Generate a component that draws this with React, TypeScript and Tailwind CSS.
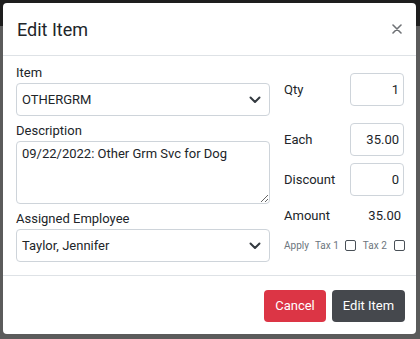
import React from "react";

const font = { fontFamily: 'Roboto, "Noto Sans", sans-serif' };

function Chevron() {
  return (
    <svg width="12" height="8" viewBox="0 0 12 8" className="shrink-0">
      <path d="M1.5 1.5 L6 6 L10.5 1.5" fill="none" stroke="#343a40" strokeWidth="2" strokeLinecap="round" strokeLinejoin="round" />
    </svg>
  );
}

function Select({ value }: { value: string }) {
  return (
    <div className="flex h-[33px] items-center justify-between rounded-[4px] border border-[#ced4da] bg-white pl-[5px] pr-[8px] text-[13px] text-[#212529]">
      <span>{value}</span>
      <Chevron />
    </div>
  );
}

function NumBox({ value }: { value: string }) {
  return (
    <div className="flex h-[33px] w-[54px] items-center justify-end rounded-[4px] border border-[#ced4da] bg-white pr-[4px] text-[13px] text-[#212529]">
      {value}
    </div>
  );
}

export default function App() {
  return (
    <div className="relative h-[339px] w-[420px] overflow-hidden bg-[#5b5b5b] p-[3px]" style={font}>
      <div className="absolute left-0 top-0 h-[26px] w-[420px] bg-[#1e1e1e]" />
      <div className="relative flex h-[331px] w-[413px] flex-col rounded-[4px] bg-white">
        <div className="flex h-[53px] items-center justify-between border-b border-[#dee2e6] pl-[14px] pr-[14px]">
          <span className="text-[18px] text-[#212529]">Edit Item</span>
          <svg width="10" height="10" viewBox="0 0 10 10">
            <path d="M1 1 L9 9 M9 1 L1 9" stroke="#6f7276" strokeWidth="1.6" strokeLinecap="round" />
          </svg>
        </div>
        <div className="flex flex-1 border-b border-[#dee2e6] pl-[13px] pt-[8px]">
          <div className="flex w-[254px] shrink-0 flex-col">
            <div className="text-[13px] leading-[18px] text-[#212529]">Item</div>
            <div className="mt-[1px]"><Select value="OTHERGRM" /></div>
            <div className="mt-[6px] text-[13px] leading-[18px] text-[#212529]">Description</div>
            <textarea
              readOnly
              value="09/22/2022: Other Grm Svc for Dog"
              className="mt-[1px] h-[63px] w-[254px] rounded-[4px] border border-[#ced4da] px-[5px] py-[3px] text-[13px] leading-[18px] text-[#212529] outline-none"
              style={font}
            />
            <div className="mt-[6px] text-[13px] leading-[18px] text-[#212529]">Assigned Employee</div>
            <div className="mt-[1px]"><Select value="Taylor, Jennifer" /></div>
          </div>
          <div className="ml-[14px] flex w-[120px] shrink-0 flex-col pt-[9px]">
            <div className="flex items-center justify-between">
              <span className="text-[13px] text-[#212529]">Qty</span>
              <NumBox value="1" />
            </div>
            <div className="mt-[17px] flex items-center justify-between">
              <span className="text-[13px] text-[#212529]">Each</span>
              <NumBox value="35.00" />
            </div>
            <div className="mt-[7px] flex items-center justify-between">
              <span className="text-[13px] text-[#212529]">Discount</span>
              <NumBox value="0" />
            </div>
            <div className="mt-[10px] flex items-center justify-between pr-[3px]">
              <span className="text-[13px] text-[#212529]">Amount</span>
              <span className="text-[13px] text-[#212529]">35.00</span>
            </div>
            <div className="mt-[12px] flex items-center whitespace-nowrap text-[10px] text-[#6c757d]">
              <span>Apply</span>
              <span className="ml-[6px]">Tax 1</span>
              <span className="ml-[6px] h-[11px] w-[11px] shrink-0 rounded-[2px] border border-[#495057]" />
              <span className="ml-[7px]">Tax 2</span>
              <span className="ml-[7px] h-[11px] w-[11px] shrink-0 rounded-[2px] border border-[#495057]" />
            </div>
          </div>
        </div>
        <div className="flex h-[58px] items-start justify-end gap-[6px] pr-[11px] pt-[14px]">
          <button className="h-[32px] w-[62px] rounded-[4px] bg-[#dc3545] text-[13px] text-white">Cancel</button>
          <button className="h-[32px] w-[73px] rounded-[4px] bg-[#45484d] text-[13px] text-white">Edit Item</button>
        </div>
      </div>
    </div>
  );
}
